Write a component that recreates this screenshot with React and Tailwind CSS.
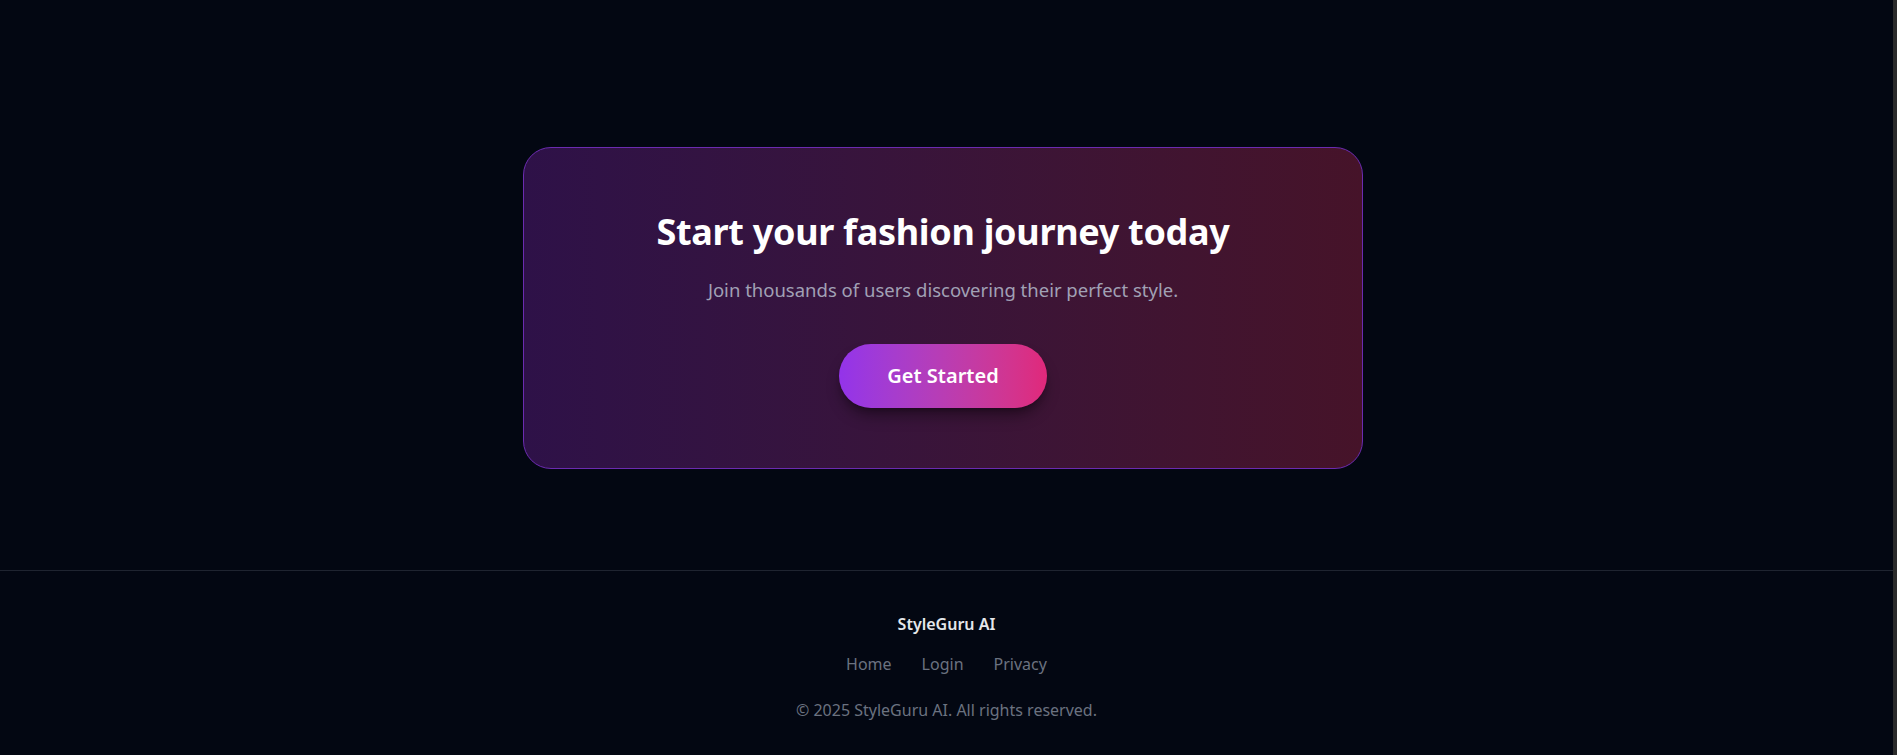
export default function App() {
  const links = ['Home', 'Login', 'Privacy'];

  return (
    <div className="flex min-h-[755px] bg-[#030712] font-['Noto_Sans',sans-serif]">
      <div className="flex-1">
        {/* CTA */}
        <section className="pt-[147px] pb-[101px] pr-[7px]">
          <div className="mx-auto w-[840px] rounded-[28px] border border-[#6b2bb0] bg-gradient-to-r from-[#2e1148] to-[#461329] px-8 pt-16 pb-[60px] text-center">
            <h2 className="text-[36px] leading-10 font-bold text-white tracking-[-0.3px]">
              Start your fashion journey today
            </h2>
            <p className="mt-6 text-[18.5px] leading-7 text-[#a1a1b5]">
              Join thousands of users discovering their perfect style.
            </p>
            <button className="mt-10 h-16 rounded-full bg-gradient-to-r from-[#9333ea] to-[#e0287a] px-12 text-[20px] font-semibold text-white shadow-lg shadow-black/40">
              Get Started
            </button>
          </div>
        </section>

        {/* Footer */}
        <footer className="border-t border-[#1f2430] pt-[41px] pb-10 text-center">
          <p className="text-[16px] leading-6 font-semibold text-[#e5e7eb]">StyleGuru AI</p>
          <nav className="mt-4 flex justify-center gap-[30px] text-[16px] leading-6 text-[#6b7280]">
            {links.map((l) => (
              <a key={l} href="#">
                {l}
              </a>
            ))}
          </nav>
          <p className="mt-[22px] text-[16px] leading-6 text-[#6b7280]">
            © 2025 StyleGuru AI. All rights reserved.
          </p>
        </footer>
      </div>
      <div className="w-[4px] bg-[#2b2b2b]" />
    </div>
  );
}
